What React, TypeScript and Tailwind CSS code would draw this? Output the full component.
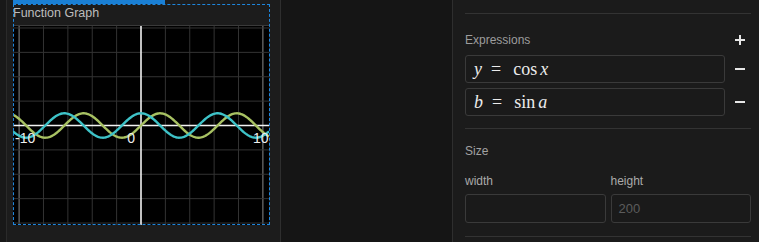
import React from "react";

const W = 256;
const H = 199;
const OX = 128;
const OY = 99.5;
const S = 12.19;

function curve(fn: (x: number) => number) {
  const pts: string[] = [];
  for (let px = 0; px <= W; px += 1) {
    const x = (px - OX) / S;
    const y = OY - fn(x) * S;
    pts.push(`${px === 0 ? "M" : "L"}${px},${y.toFixed(2)}`);
  }
  return pts.join(" ");
}

function Graph() {
  const ticks = [-5, -4, -3, -2, -1, 0, 1, 2, 3, 4, 5];
  const rows = [-4, -3, -2, -1, 1, 2, 3, 4];
  return (
    <svg width={W} height={H} className="block bg-black">
      {ticks.map((k) =>
        k === 0 ? null : (
          <line
            key={`v${k}`}
            x1={OX + k * 2 * S}
            x2={OX + k * 2 * S}
            y1={0}
            y2={H}
            stroke={Math.abs(k) === 5 ? "#8a8a8a" : "#333333"}
            strokeWidth={1}
          />
        )
      )}
      {rows.map((k) => (
        <line
          key={`h${k}`}
          x1={0}
          x2={W}
          y1={OY + k * 2 * S}
          y2={OY + k * 2 * S}
          stroke="#333333"
          strokeWidth={1}
        />
      ))}
      <line x1={0} x2={W} y1={OY} y2={OY} stroke="#f2f2f2" strokeWidth={1.6} />
      <line x1={OX} x2={OX} y1={0} y2={H} stroke="#f2f2f2" strokeWidth={1.6} />
      <path d={curve(Math.sin)} fill="none" stroke="#a8c263" strokeWidth={2.4} />
      <path d={curve(Math.cos)} fill="none" stroke="#3ec3c8" strokeWidth={2.4} />
      <g fontFamily="'Liberation Sans', Arial, sans-serif" fontSize="14" fill="#eeeeee">
        <text x={2} y={117}>-10</text>
        <text x={122} y={117} textAnchor="end">0</text>
        <text x={240} y={117}>10</text>
      </g>
    </svg>
  );
}

function PlusIcon() {
  return (
    <svg width="12" height="12" viewBox="0 0 12 12">
      <path d="M1 6h10M6 1v10" stroke="#e6e6e6" strokeWidth="2" />
    </svg>
  );
}

function MinusIcon() {
  return (
    <svg width="12" height="12" viewBox="0 0 12 12">
      <path d="M1 6h10" stroke="#e6e6e6" strokeWidth="2" />
    </svg>
  );
}

function MathRow({ lhs, fn, arg }: { lhs: string; fn: string; arg: string }) {
  return (
    <div className="flex items-center gap-[9px]">
      <div className="flex h-[28px] w-[260px] items-center rounded-[3px] border border-[#3a3a3a] bg-[#1a1a1a] pl-[8px] text-[18px] text-[#ececec] [font-family:'Liberation_Serif','Times_New_Roman',serif]">
        <span className="italic">{lhs}</span>
        <span className="ml-[9px]">=</span>
        <span className="ml-[12px]">{fn}</span>
        <span className="ml-[3px] italic">{arg}</span>
      </div>
      <div className="flex w-[12px] justify-center">
        <MinusIcon />
      </div>
    </div>
  );
}

export default function App() {
  return (
    <div className="flex h-[242px] w-[759px] overflow-hidden bg-[#1c1c1c] [font-family:'Liberation_Sans',Arial,sans-serif]">
      {/* Canvas panel */}
      <div className="w-[7px] shrink-0 bg-[#181818] border-r border-[#2a2a2a]" />
      <div className="w-[273px] shrink-0 bg-[#1c1c1c] pl-[6px]">
        <div className="relative w-[256px]">
          <div className="h-[4px] w-[152px] bg-[#1a7fd4]" />
          <div className="h-[21px] pt-[1px] text-[12.5px] leading-[16px] text-[#bdbdbd]">Function Graph</div>
          <div className="border-t border-[#3a3a3a]">
            <Graph />
          </div>
          <div className="pointer-events-none absolute left-0 top-[4px] h-[221px] w-[257px] border border-dashed border-[#1f86dc]" />
        </div>
      </div>
      <div className="w-[173px] shrink-0 bg-[#151515] border-l border-r border-[#2e2e2e]" />

      {/* Properties panel */}
      <div className="flex-1 bg-[#1b1b1b] pl-[12px] pr-[8px] text-[12px] text-[#9d9d9d]">
        <div className="mt-[13px] border-t border-[#333333]" />
        <div className="mt-[16px] flex h-[20px] items-center justify-between">
          <span className="leading-[16px]">Expressions</span>
          <div className="mr-[5px] flex w-[12px] justify-center pb-[1px]">
            <PlusIcon />
          </div>
        </div>
        <div className="mt-[5px] flex flex-col gap-[5px]">
          <MathRow lhs="y" fn="cos" arg="x" />
          <MathRow lhs="b" fn="sin" arg="a" />
        </div>
        <div className="mt-[12px] border-t border-[#333333]" />
        <div className="mt-[14px] leading-[16px] text-[#a2a2a2]">Size</div>
        <div className="mt-[14px] grid grid-cols-2 gap-[5px]">
          <div>
            <div className="leading-[16px] text-[#aaaaaa]">width</div>
            <div className="mt-[5px] h-[29px] rounded-[3px] border border-[#3a3a3a] bg-[#1a1a1a]" />
          </div>
          <div>
            <div className="leading-[16px] text-[#aaaaaa]">height</div>
            <div className="mt-[5px] flex h-[29px] items-center rounded-[3px] border border-[#3a3a3a] bg-[#1a1a1a] pl-[7px] text-[13px] text-[#5c5c5c]">
              200
            </div>
          </div>
        </div>
        <div className="mt-[13px] border-t border-[#333333]" />
      </div>
    </div>
  );
}
